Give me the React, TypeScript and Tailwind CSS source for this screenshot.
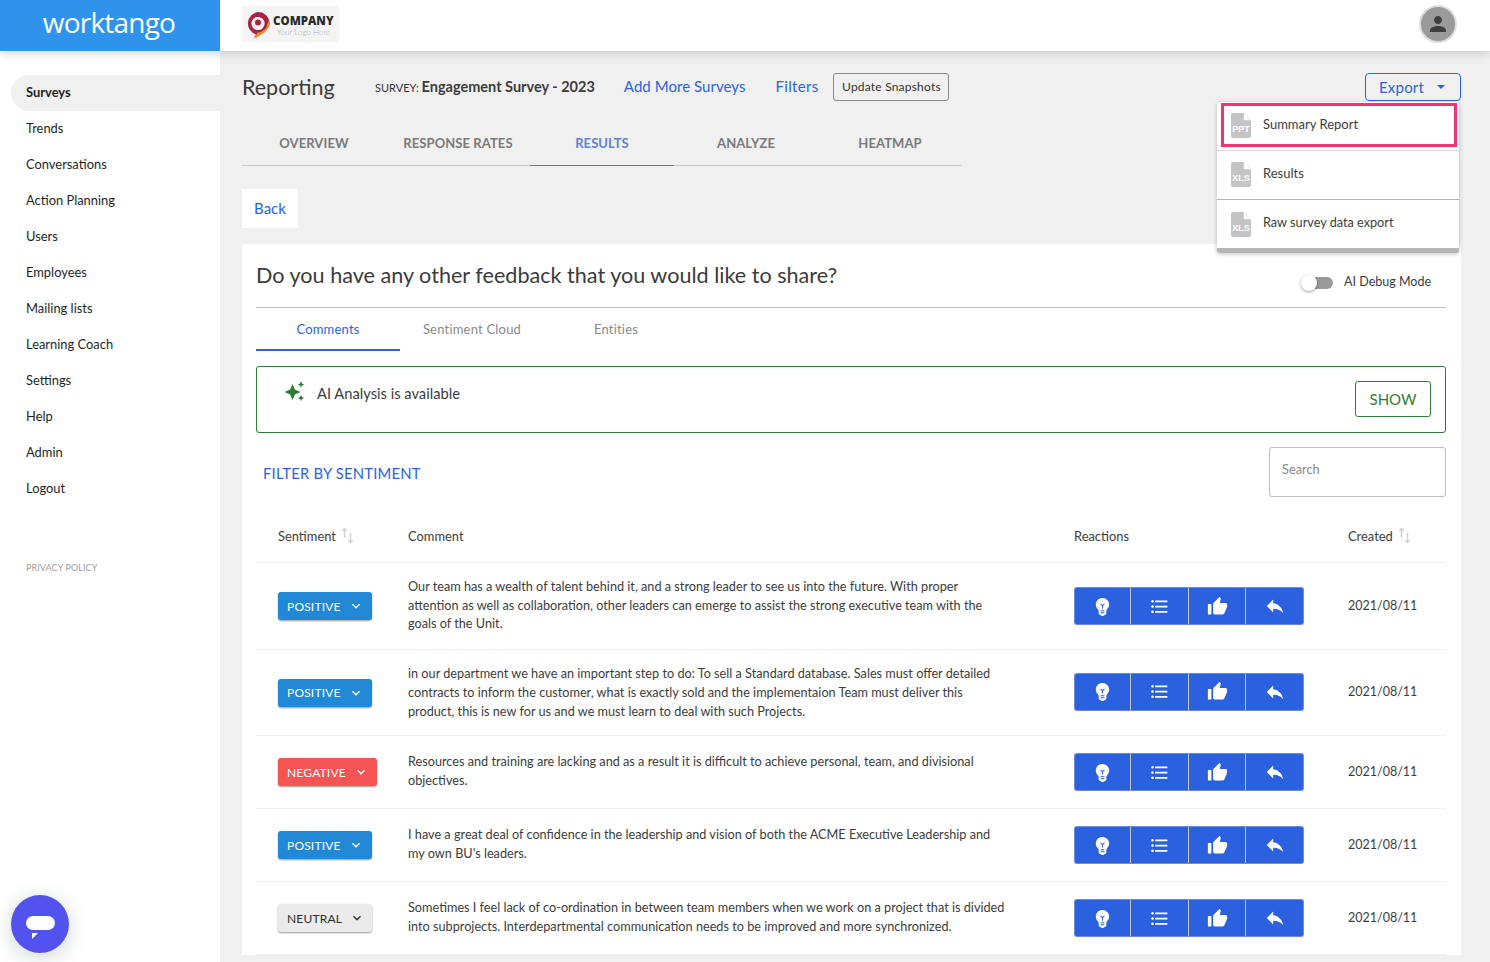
import React from "react";
import { MdEmojiObjects, MdFormatListBulleted, MdThumbUp, MdReply, MdPerson, MdKeyboardArrowDown } from "react-icons/md";

const nav = ["Surveys", "Trends", "Conversations", "Action Planning", "Users", "Employees", "Mailing lists", "Learning Coach", "Settings", "Help", "Admin", "Logout"];

const rows = [
  { s: "POSITIVE", h: "h-[87px]", lh: "leading-[18.4px] -mt-[2px]", up: "", upDate: "", t: ["Our team has a wealth of talent behind it, and a strong leader to see us into the future. With proper", "attention as well as collaboration, other leaders can emerge to assist the strong executive team with the", "goals of the Unit."] },
  { s: "POSITIVE", h: "h-[86px]", lh: "leading-[19px]", up: "-mt-[2px]", upDate: "-mt-[1px]", t: ["in our department we have an important step to do: To sell a Standard database. Sales must offer detailed", "contracts to inform the customer, what is exactly sold and the implementaion Team must deliver this", "product, this is new for us and we must learn to deal with such Projects."] },
  { s: "NEGATIVE", h: "h-[73px]", lh: "leading-[19px] -mt-[2px]", up: "", upDate: "", t: ["Resources and training are lacking and as a result it is difficult to achieve personal, team, and divisional", "objectives."] },
  { s: "POSITIVE", h: "h-[73px]", lh: "leading-[19px] -mt-[2px]", up: "", upDate: "", t: ["I have a great deal of confidence in the leadership and vision of both the ACME Executive Leadership and", "my own BU's leaders."] },
  { s: "NEUTRAL", h: "h-[73px]", lh: "leading-[19px] -mt-[2px]", up: "", upDate: "", t: ["Sometimes I feel lack of co-ordination in between team members when we work on a project that is divided", "into subprojects. Interdepartmental communication needs to be improved and more synchronized."] },
];

function SortArrows() {
  return (
    <svg width="13" height="17" viewBox="0 0 13 17" fill="none" stroke="#d2d2d2" strokeWidth="1.5" className="ml-[5px] -mt-[2px]">
      <path d="M3.5 11V1.5M1.3 3.7l2.2-2.2 2.2 2.2" />
      <path d="M9.5 6v9.5M7.3 13.3l2.2 2.2 2.2-2.2" />
    </svg>
  );
}

function Star4({ cx, cy, r }: { cx: number; cy: number; r: number }) {
  const k = r * 0.3;
  return <path d={`M${cx} ${cy - r}L${cx + k} ${cy - k}L${cx + r} ${cy}L${cx + k} ${cy + k}L${cx} ${cy + r}L${cx - k} ${cy + k}L${cx - r} ${cy}L${cx - k} ${cy - k}z`} />;
}

function FileIcon({ label, className = "" }: { label: string; className?: string }) {
  return (
    <div className={`relative w-[20px] h-[25px] shrink-0 ${className}`}>
      <svg width="20" height="25" viewBox="0 0 20 25" className="absolute inset-0">
        <path d="M2 0h10.5L20 7.5V23a2 2 0 0 1-2 2H2a2 2 0 0 1-2-2V2a2 2 0 0 1 2-2z" fill="#c4c4c4" />
        <path d="M12.8 0.5L19.5 7.2H12.8z" fill="#ffffff" />
      </svg>
      <span className="absolute left-0 right-0 top-[11px] text-center text-[9px] leading-[10px] font-bold text-white font-['Liberation_Sans',sans-serif]">{label}</span>
    </div>
  );
}

function Sentiment({ s }: { s: string }) {
  const style = s === "POSITIVE" ? "bg-[#2188d6] text-white w-[94px]" : s === "NEGATIVE" ? "bg-[#f45554] text-white w-[99px]" : "bg-[#ebebeb] text-[#2b2b2b] w-[94px]";
  return (
    <div className={`${style} h-[28px] rounded-[3px] flex items-center pl-[9px] text-[12px] tracking-[0.18px] shadow-[0_1px_2px_rgba(0,0,0,0.4)]`}>
      <span className="pt-[1px]">{s}</span>
      <MdKeyboardArrowDown className="ml-[7px] text-[16px]" />
    </div>
  );
}

function Reactions() {
  const cell = "h-full flex items-center justify-center text-white";
  return (
    <div className="w-[230px] h-[38px] bg-[#2b60de] rounded-[3px] flex border border-[#c9d3ea]/40">
      <div className={`${cell} w-[56px] border-r border-[#c8c8c0]`}><MdEmojiObjects className="text-[23px]" /></div>
      <div className={`${cell} w-[58px] border-r border-[#c8c8c0]`}><MdFormatListBulleted className="text-[21px]" /></div>
      <div className={`${cell} w-[57px] border-r border-[#c8c8c0]`}><MdThumbUp className="text-[21px]" /></div>
      <div className={`${cell} flex-1`}><MdReply className="text-[22px]" /></div>
    </div>
  );
}

function Logo() {
  return (
    <div className="w-[97px] h-[36px] bg-[#f4f4f4] flex items-center pl-[3px]">
      <svg width="26" height="30" viewBox="0 0 26 30" className="shrink-0 mt-[2px]">
        <path d="M13 2a11.5 11.5 0 0 1 11.5 11.5c0 1-.1 2-.4 2.9L9 27.5l2-3.1A11.5 11.5 0 0 1 13 2z" fill="#a62444" />
        <path d="M24 10c1.4 5-1 9.5-4.5 12.5L9 29l3.5-6.5c5 .2 9-3.2 9.6-7.5z" fill="#f08a24" />
        <circle cx="13" cy="13.5" r="6.6" fill="#f4f4f4" />
        <circle cx="13" cy="12.5" r="3" fill="#a62444" />
      </svg>
      <div className="ml-[2px] flex flex-col items-center pt-[3px]">
        <span className="text-[11.5px] leading-[12px] font-extrabold text-[#2c2c2c] font-['Open_Sans',sans-serif]">COMPANY</span>
        <span className="text-[8px] leading-[10px] font-light text-[#a8a8a8]">Your Logo Here</span>
      </div>
    </div>
  );
}

export default function App() {
  return (
    <div className="w-[1490px] h-[962px] overflow-hidden flex flex-col bg-[#f0f0f0] font-['Lato',sans-serif] text-[#3c3c3c]">
      <header className="relative z-20 h-[51px] shrink-0 bg-white flex items-center pb-[3px] shadow-[0_2px_10px_rgba(0,0,0,0.18)]">
        <div className="w-[220px] h-[51px] -mb-[3px] bg-[#2f93eb] flex items-center justify-center pr-[2px] pb-[8px]">
          <span className="text-white text-[28px] leading-none font-medium font-['Open_Sans',sans-serif] tracking-[-0.8px]">worktango</span>
        </div>
        <div className="ml-[22px]"><Logo /></div>
        <div className="ml-auto mr-[33px] w-[38px] h-[38px] rounded-full bg-[#9a9a9a] border-2 border-[#dedede] flex items-center justify-center text-[#3f3f3f]">
          <MdPerson className="text-[24px]" />
        </div>
      </header>

      <div className="flex-1 flex min-h-0">
        <aside className="relative z-10 w-[220px] shrink-0 bg-white pt-[24px] text-[12.9px] text-[#1f1f1f]">
          <nav className="flex flex-col">
            {nav.map((n, i) => (
              <div key={n} className={`h-[36px] ml-[11px] pl-[15px] flex items-center ${i === 0 ? "bg-[#f0f0f0] rounded-l-[18px] font-bold" : ""}`}>{n}</div>
            ))}
          </nav>
          <div className="mt-[54px] ml-[26px] text-[9px] tracking-[0.1px] text-[#9c9c9c]">PRIVACY POLICY</div>
          <div className="absolute left-[11px] top-[844px] w-[58px] h-[58px] rounded-full bg-[#5252ee] shadow-[0_4px_20px_rgba(60,90,90,0.25)] flex items-center justify-center">
            <div className="relative w-[29px] h-[14px] bg-white rounded-[7px] -mt-[2px]">
              <svg width="6" height="6" viewBox="0 0 6 6" className="absolute left-[6px] top-[17px]"><path d="M0 0h6L0 6z" fill="#fff" /></svg>
            </div>
          </div>
        </aside>

        <main className="relative flex-1 min-w-0 pl-[22px] pr-[29px]">
          <div className="h-[72px] flex items-center">
            <h1 className="text-[21.5px] text-[#3b3b3b] font-normal w-[133px]">Reporting</h1>
            <div className="text-[14.5px] -mt-[1px] font-medium text-[#333]"><span className="text-[11px] font-normal">SURVEY: </span><span className="font-bold text-[#3c3c3c]">Engagement Survey - 2023</span></div>
            <span className="ml-[29px] text-[15px] tracking-[0.05px] text-[#2b63de] -mt-[1px]">Add More Surveys</span>
            <span className="ml-[30px] text-[15px] tracking-[0.3px] text-[#2b63de] -mt-[1px]">Filters</span>
            <div className="ml-[15px] h-[28px] w-[116px] rounded-[3px] border border-[#8a8a8a] flex items-center justify-center text-[12px] tracking-[0.2px] text-[#333] -mt-[1px]">Update Snapshots</div>
            <div className="ml-auto h-[28px] w-[96px] rounded-[4px] border border-[#2b63de] text-[#2b63de] text-[15px] tracking-[0.2px] flex items-center pl-[13px]">
              Export
              <span className="ml-[13px] w-0 h-0 border-x-[4px] border-x-transparent border-t-[4px] border-t-[#2b63de]" />
            </div>
          </div>

          <div className="w-[720px] h-[43px] flex border-b border-[#c8c8c8] text-[13px] font-bold text-[#7a7a7a] tracking-[0.08px]">
            <div className="w-[144px] flex items-center justify-center">OVERVIEW</div>
            <div className="w-[144px] flex items-center justify-center">RESPONSE RATES</div>
            <div className="w-[144px] flex items-center justify-center text-[#5b83dc] border-b border-[#777] -mb-px">RESULTS</div>
            <div className="w-[144px] flex items-center justify-center">ANALYZE</div>
            <div className="w-[144px] flex items-center justify-center">HEATMAP</div>
          </div>

          <div className="mt-[23px] w-[56px] h-[39px] bg-white flex items-center justify-center text-[15px] text-[#2b63de]">Back</div>

          <section className="mt-[16px] bg-white rounded-t-[3px] pl-[14px] pr-[15px]">
            <div className="h-[64px] flex items-center justify-between border-b border-[#bdbdbd]">
              <h2 className="text-[21.6px] text-[#3b3b3b] font-normal">Do you have any other feedback that you would like to share?</h2>
              <div className="flex items-center mr-[15px] mt-[14px] text-[12.5px] text-[#3c3c3c]">
                <div className="relative w-[27px] h-[12px] rounded-full bg-[#9a9a9a] mr-[11px]">
                  <div className="absolute -left-[5px] -top-[2px] w-[16px] h-[16px] rounded-full bg-white shadow-[0_1px_3px_rgba(0,0,0,0.4)]" />
                </div>
                AI Debug Mode
              </div>
            </div>

            <div className="h-[43px] flex text-[13px] text-[#8a8a8a] tracking-[0.2px]">
              <div className="w-[144px] flex items-center justify-center pt-[2px] text-[#2b63de] border-b-2 border-[#2b63de]">Comments</div>
              <div className="w-[144px] flex items-center justify-center">Sentiment Cloud</div>
              <div className="w-[144px] flex items-center justify-center">Entities</div>
            </div>

            <div className="mt-[15px] h-[67px] rounded-[3px] border border-[#2e7d32] flex items-start pl-[27px] pr-[14px]">
              <svg width="22" height="22" viewBox="0 0 22 22" fill="#2e7d32" className="mt-[14px] shrink-0">
                <Star4 cx={8.5} cy={11} r={8} />
                <Star4 cx={17} cy={3.5} r={3.2} />
                <Star4 cx={17} cy={17} r={3.2} />
              </svg>
              <span className="ml-[11px] mt-[15px] text-[14.7px] text-[#3c3c3c]">AI Analysis is available</span>
              <div className="ml-auto mt-[14px] w-[76px] h-[36px] rounded-[3px] border border-[#2e7d32] text-[#2e7d32] text-[15px] flex items-center justify-center">SHOW</div>
            </div>

            <div className="mt-[14px] h-[50px] flex items-center justify-between">
              <span className="ml-[7px] pt-[2px] text-[14.8px] text-[#2b63de] tracking-[0.2px]">FILTER BY SENTIMENT</span>
              <div className="w-[177px] h-[50px] rounded-[3px] border border-[#bdbdbd] flex items-center pl-[12px] pb-[5px] text-[12.8px] text-[#8a8a8a]">Search</div>
            </div>

            <div className="mt-[15px] h-[51px] flex items-center border-b border-[#efefef] text-[12.9px] text-[#3c3c3c]">
              <div className="w-[152px] pl-[22px] flex items-center">Sentiment<SortArrows /></div>
              <div className="w-[666px]">Comment</div>
              <div className="w-[274px]">Reactions</div>
              <div className="flex items-center">Created<SortArrows /></div>
            </div>

            {rows.map((r, i) => (
              <div key={i} className={`${r.h} flex items-center border-b border-[#efefef]`}>
                <div className="w-[152px] pl-[22px] shrink-0"><Sentiment s={r.s} /></div>
                <div className={`w-[666px] shrink-0 text-[12.7px] ${r.lh} text-[#3c3c3c]`}>
                  {r.t.map((l) => <div key={l} className="whitespace-nowrap">{l}</div>)}
                </div>
                <div className={`w-[274px] shrink-0 ${r.up}`}><Reactions /></div>
                <div className={`text-[12.5px] text-[#3c3c3c] ${r.upDate}`}>2021/08/11</div>
              </div>
            ))}
          </section>

          <div className="absolute left-[997px] top-[51px] z-30 w-[242px] bg-white rounded-[3px] shadow-[0_1px_4px_rgba(0,0,0,0.25)] border-b-[5px] border-[#b5b5b5] text-[13px] text-[#3c3c3c]">
            <div className="h-[49px] border-b border-[#d9d9d9] pt-[1px] pl-[4px] pr-[2px]">
              <div className="h-[44px] border-[3px] border-[#f5336f] flex items-center pl-[7px]">
                <FileIcon label="PPT" />
                <span className="ml-[12px]">Summary Report</span>
              </div>
            </div>
            <div className="h-[49px] border-b border-[#b5b5b5] flex items-center pl-[14px]">
              <FileIcon label="XLS" className="-mt-[1px]" />
              <span className="ml-[12px] -mt-[2px]">Results</span>
            </div>
            <div className="h-[48px] flex items-center pl-[14px]">
              <FileIcon label="XLS" />
              <span className="ml-[12px] -mt-[2px] text-[12.7px]">Raw survey data export</span>
            </div>
          </div>
        </main>
      </div>
    </div>
  );
}
